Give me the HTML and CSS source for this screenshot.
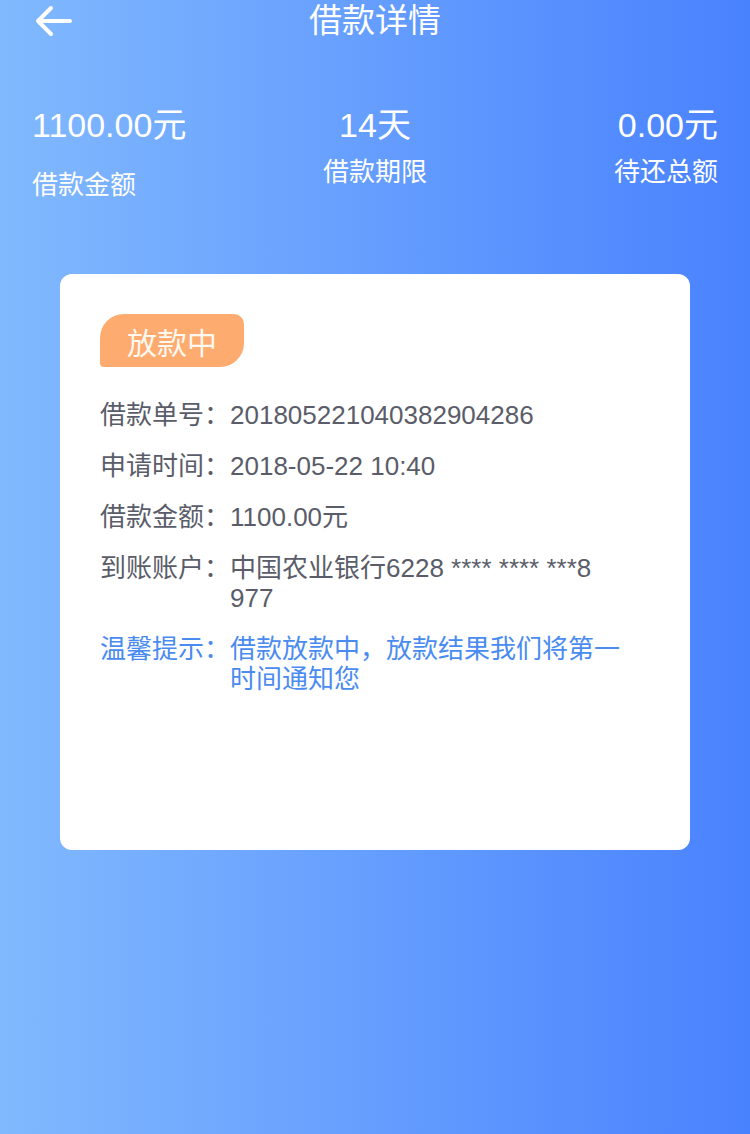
FILE: index.html
```html
<!DOCTYPE html>
<html lang="zh-CN">
<head>
  <meta charset="UTF-8" />
  <meta name="viewport" content="width=device-width, initial-scale=1" />
  <title>借款详情</title>
  <link rel="stylesheet" href="styles.css">
</head>
<body>
  <!-- Header -->
  <div class="header">
    <span class="back">
      <svg width="40" height="34" viewBox="0 0 40 34">
        <path d="M37 17 H5 M18 4 L5 17 L18 30" fill="none" stroke="#fff" stroke-width="4" stroke-linecap="round" stroke-linejoin="round" />
      </svg>
    </span>
    <h1 class="title">借款详情</h1>
    <span></span>
  </div>

  <!-- Summary -->
  <div class="summary">
    <div class="stat stat-left">
      <div class="stat-value">1100.00元</div>
      <div class="stat-label stat-label-low">借款金额</div>
    </div>
    <div class="stat stat-center">
      <div class="stat-value">14天</div>
      <div class="stat-label">借款期限</div>
    </div>
    <div class="stat stat-right">
      <div class="stat-value">0.00元</div>
      <div class="stat-label">待还总额</div>
    </div>
  </div>

  <!-- Detail card -->
  <div class="card">
    <span class="badge">放款中</span>

    <div class="rows">
      <div class="row">
        <span class="row-label">借款单号：</span>
        <span class="row-value">201805221040382904286</span>
      </div>
      <div class="row">
        <span class="row-label">申请时间：</span>
        <span class="row-value">2018-05-22 10:40</span>
      </div>
      <div class="row">
        <span class="row-label">借款金额：</span>
        <span class="row-value">1100.00元</span>
      </div>
      <div class="row">
        <span class="row-label">到账账户：</span>
        <span class="row-value">中国农业银行6228 **** **** ***8<br>977</span>
      </div>
      <div class="row row-tip">
        <span class="row-label">温馨提示：</span>
        <span class="row-value">借款放款中，放款结果我们将第一时间通知您</span>
      </div>
    </div>
  </div>
</body>
</html>
```

FILE: styles.css
```css
body {
  margin: 0;
  min-height: 1134px;
  font-family: "Liberation Sans", "Noto Sans CJK SC", sans-serif;
  background: linear-gradient(to right, #81b9fe, #4982fe);
  color: #fff;
}

.header {
  display: grid;
  grid-template-columns: 1fr auto 1fr;
  align-items: center;
  height: 42px;
}

.back {
  display: flex;
  align-items: center;
  padding-left: 33px;
}

.title {
  margin: 0;
  font-size: 33px;
  font-weight: normal;
  line-height: 42px;
}

.summary {
  display: grid;
  grid-template-columns: 1fr 1fr 1fr;
  margin-top: 63px;
  padding: 0 32px;
}

.stat-center {
  text-align: center;
}

.stat-right {
  text-align: right;
}

.stat-value {
  font-size: 34px;
  line-height: 40px;
}

.stat-label {
  font-size: 26px;
  line-height: 30px;
  margin-top: 12px;
}

.stat-label-low {
  margin-top: 25px;
}

.card {
  box-sizing: border-box;
  width: 630px;
  height: 576px;
  margin: 74px auto 0;
  padding: 40px 40px 0;
  background: #fff;
  border-radius: 12px;
}

.badge {
  display: inline-flex;
  align-items: center;
  justify-content: center;
  width: 144px;
  height: 53px;
  background: #fdab6e;
  color: #fff8f0;
  font-size: 30px;
  border-radius: 24px 10px 24px 4px;
}

.rows {
  display: flex;
  flex-direction: column;
  gap: 21px;
  margin-top: 33px;
}

.row {
  display: flex;
  font-size: 26px;
  line-height: 30px;
  color: #5a5d69;
}

.row-label {
  flex: none;
  width: 130px;
}

.row-value {
  width: 400px;
}

.row-tip {
  color: #4a8bf0;
}
```
